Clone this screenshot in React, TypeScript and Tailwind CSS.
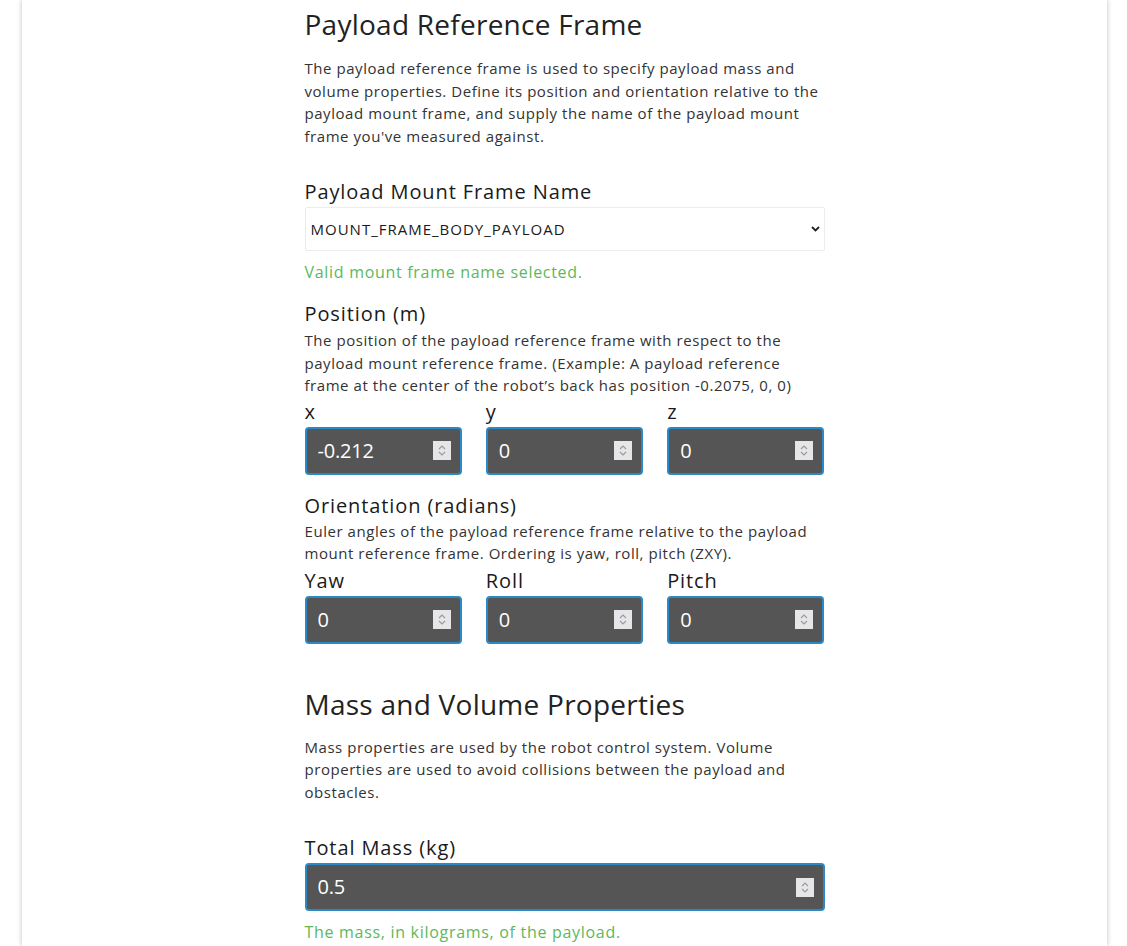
import React, { useState } from "react";

const font = { fontFamily: '"Open Sans", "DejaVu Sans", sans-serif' };

function Spinner() {
  return (
    <div className="w-[18px] h-[19px] bg-[#e6e6e9] flex flex-col items-center justify-center gap-[1px] shrink-0">
      <svg width="8" height="5" viewBox="0 0 8 5" className="text-[#9a9aa0]">
        <path d="M1 4 L4 1 L7 4" fill="none" stroke="currentColor" strokeWidth="1.2" />
      </svg>
      <svg width="8" height="5" viewBox="0 0 8 5" className="text-[#9a9aa0]">
        <path d="M1 1 L4 4 L7 1" fill="none" stroke="currentColor" strokeWidth="1.2" />
      </svg>
    </div>
  );
}

function NumberBox({ value }: { value: string }) {
  const [v, setV] = useState(value);
  return (
    <div className="h-[48px] flex items-center bg-[#555555] border-2 border-[#2b8ac6] rounded-[4px] pl-[11px] pr-[9px]">
      <input
        value={v}
        onChange={(e) => setV(e.target.value)}
        className="flex-1 min-w-0 bg-transparent text-white text-[20px] tracking-[-0.2px] outline-none"
      />
      <Spinner />
    </div>
  );
}

function Field({ label, value }: { label: string; value: string }) {
  return (
    <div className="flex flex-col">
      <label className="text-[20px] leading-[24px] tracking-[0.9px] text-[#1a1a1a] mb-[3px]">{label}</label>
      <NumberBox value={value} />
    </div>
  );
}

export default function App() {
  return (
    <div className="min-h-screen bg-white" style={font}>
      <div className="ml-[22px] mr-[20px] min-h-[946px] bg-white shadow-[0_0_5px_rgba(0,0,0,0.25)]">
        <div className="w-[520px] mx-auto pt-[7px] text-[#333]">
          <h2 className="text-[28px] leading-[34px] tracking-[0.25px] text-[#222]">Payload Reference Frame</h2>
          <p className="mt-[16px] text-[15px] leading-[22.5px] tracking-[0.55px]">
            The payload reference frame is used to specify payload mass and volume properties. Define its position and
            orientation relative to the payload mount frame, and supply the name of the payload mount frame you've
            measured against.
          </p>

          <div className="mt-[33px] text-[20px] leading-[24px] tracking-[0.9px] text-[#1a1a1a]">
            Payload Mount Frame Name
          </div>
          <div className="relative mt-[3px]">
            <select className="w-full h-[44px] appearance-none border border-[#ececec] rounded-[2px] pl-[5px] text-[15px] tracking-[1px] text-[#1a1a1a] bg-white outline-none">
              <option>MOUNT_FRAME_BODY_PAYLOAD</option>
            </select>
            <svg
              width="9"
              height="6"
              viewBox="0 0 9 6"
              className="absolute right-[5px] top-[19px] pointer-events-none"
            >
              <path d="M1 1 L4.5 4.5 L8 1" fill="none" stroke="#222" strokeWidth="1.8" />
            </svg>
          </div>
          <div className="mt-[9px] text-[16px] leading-[24px] tracking-[0.7px] text-[#5cb85c]">
            Valid mount frame name selected.
          </div>

          <div className="mt-[18px] text-[20px] leading-[24px] tracking-[0.9px] text-[#1a1a1a]">Position (m)</div>
          <p className="mt-[3px] text-[15px] leading-[22.5px] tracking-[0.55px]">
            The position of the payload reference frame with respect to the payload mount reference frame. (Example: A
            payload reference frame at the center of the robot’s back has position -0.2075, 0, 0)
          </p>
          <div className="grid grid-cols-3 gap-x-[24px] mt-[3px]">
            <Field label="x" value="-0.212" />
            <Field label="y" value="0" />
            <Field label="z" value="0" />
          </div>

          <div className="mt-[19px] text-[20px] leading-[24px] tracking-[0.9px] text-[#1a1a1a]">
            Orientation (radians)
          </div>
          <p className="mt-[2px] text-[15px] leading-[22.5px] tracking-[0.55px]">
            Euler angles of the payload reference frame relative to the payload mount reference frame. Ordering is yaw,
            roll, pitch (ZXY).
          </p>
          <div className="grid grid-cols-3 gap-x-[24px] mt-[4px]">
            <Field label="Yaw" value="0" />
            <Field label="Roll" value="0" />
            <Field label="Pitch" value="0" />
          </div>

          <h2 className="mt-[43px] text-[28px] leading-[34px] tracking-[0.25px] text-[#222]">
            Mass and Volume Properties
          </h2>
          <p className="mt-[15px] text-[15px] leading-[22.5px] tracking-[0.55px]">
            Mass properties are used by the robot control system. Volume properties are used to avoid collisions
            between the payload and obstacles.
          </p>

          <div className="mt-[33px]">
            <Field label="Total Mass (kg)" value="0.5" />
          </div>
          <div className="mt-[9px] text-[16px] leading-[24px] tracking-[0.7px] text-[#5cb85c]">
            The mass, in kilograms, of the payload.
          </div>
        </div>
      </div>
    </div>
  );
}
